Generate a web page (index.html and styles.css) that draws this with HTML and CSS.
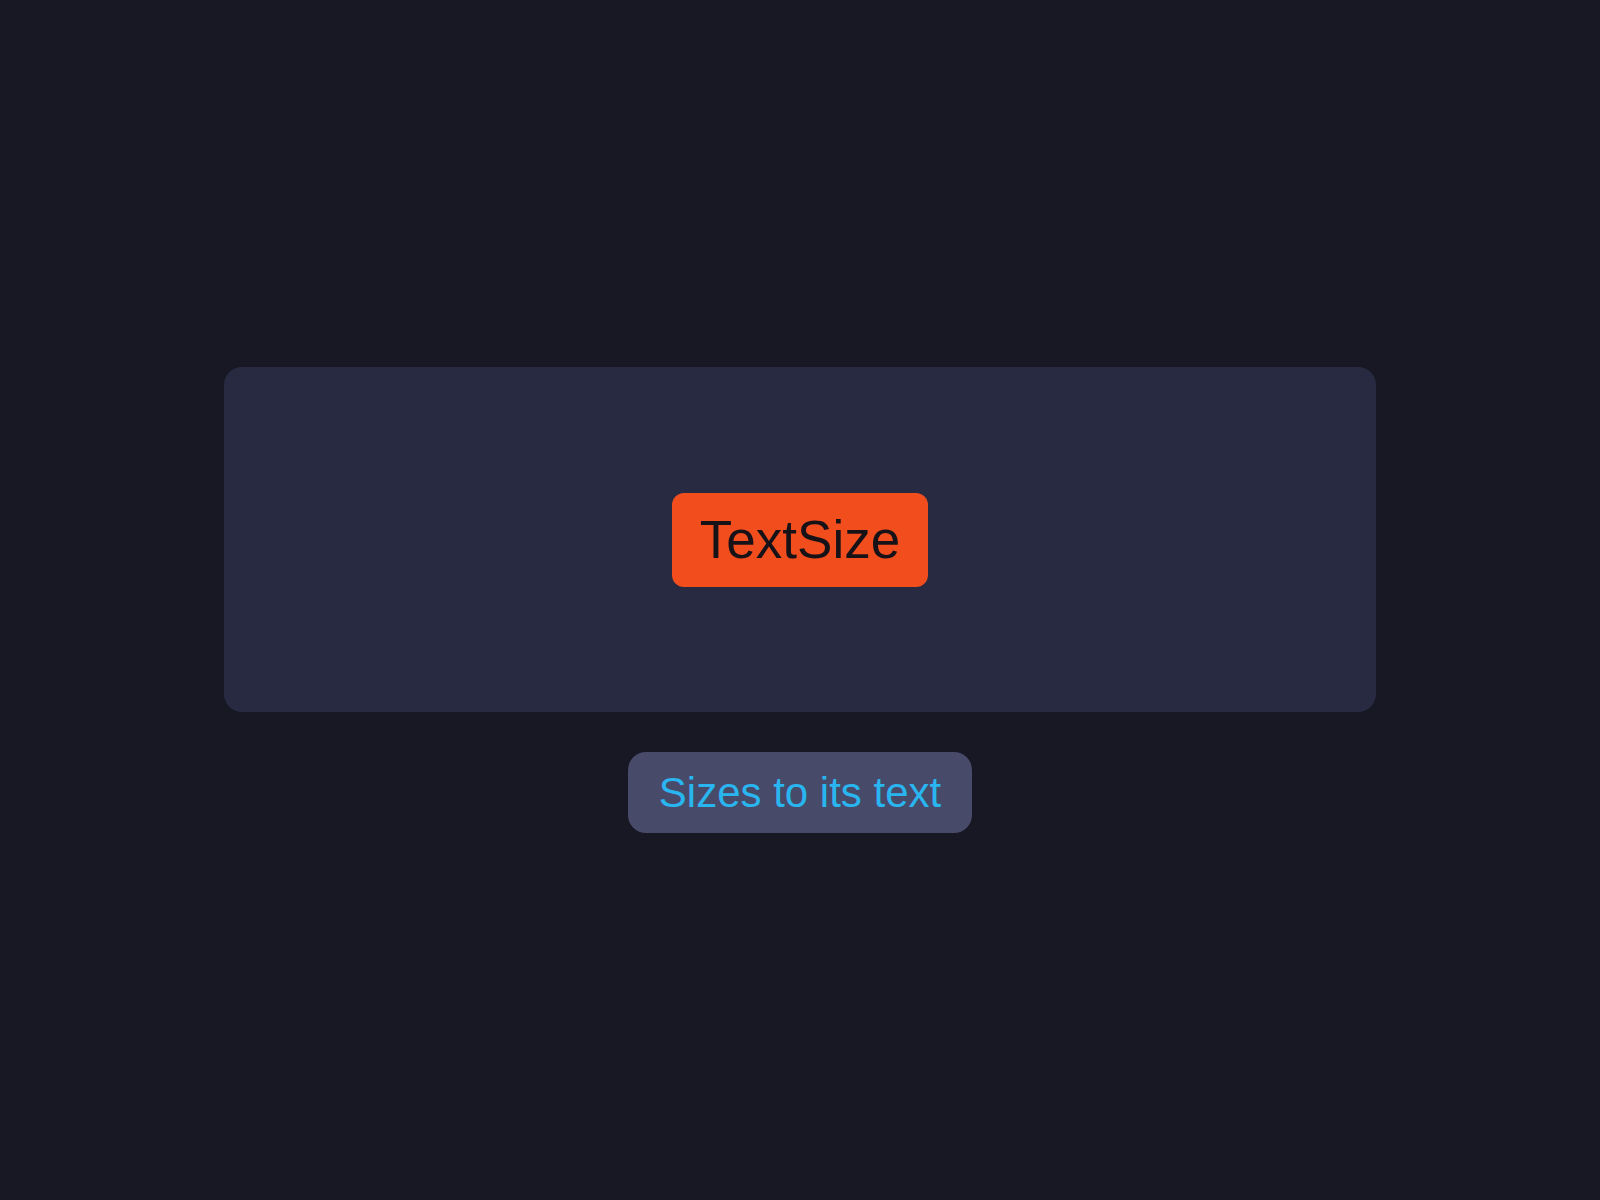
FILE: index.html
```html
<!DOCTYPE html>
<html lang="en">
<head>
    <meta charset="UTF-8">
    <meta name="viewport" content="width=device-width, initial-scale=1.0">
    <title>TextSize</title>
    <link rel="stylesheet" href="styles.css">
</head>
<body>
    <div class="stage">
        <button class="sized-btn" type="button">TextSize</button>
    </div>
    <div class="caption">Sizes to its text</div>
</body>
</html>
```

FILE: styles.css
```css
body {
    font-family: "Liberation Sans", Arial, sans-serif;
    display: flex;
    flex-direction: column;
    justify-content: center;
    align-items: center;
    gap: 40px;
    height: 100vh;
    margin: 0;
    background-color: #181724;
}
.stage {
    width: 1152px;
    height: 345px;
    display: flex;
    justify-content: center;
    align-items: center;
    background-color: #282a42;
    border-radius: 18px;
}
.sized-btn {
    font-family: inherit;
    font-size: 53px;
    line-height: 58px;
    padding: 18px 28px;
    border: none;
    border-radius: 12px;
    background-color: #f24e1d;
    color: #161218;
    cursor: pointer;
}
.caption {
    font-size: 42px;
    line-height: 49px;
    padding: 16px 31px;
    border-radius: 18px;
    background-color: #484a69;
    color: #29b6f0;
}
```
